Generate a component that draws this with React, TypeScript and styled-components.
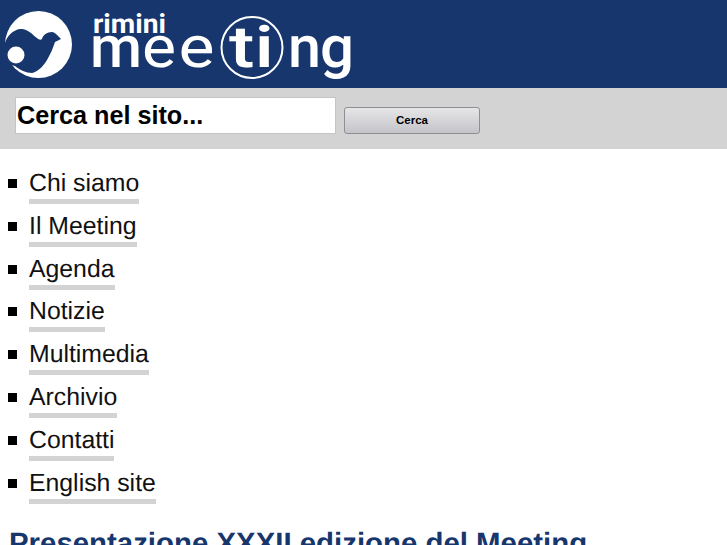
import React from "react";
import styled, { createGlobalStyle } from "styled-components";

const MENU = [
  "Chi siamo",
  "Il Meeting",
  "Agenda",
  "Notizie",
  "Multimedia",
  "Archivio",
  "Contatti",
  "English site",
];

const GlobalStyle = createGlobalStyle`
  html, body {
    margin: 0;
    padding: 0;
    height: 545px;
    overflow: hidden;
    background: #fff;
    font-family: "Liberation Sans", Arial, sans-serif;
    color: #000;
    text-rendering: geometricPrecision;
  }
`;

const Header = styled.header`
  height: 88px;
  background-color: #17366d;
`;

const SearchBar = styled.form`
  height: 61px;
  box-sizing: border-box;
  background-color: #d3d3d3;
  padding: 9px 0 15px 15px;
  display: flex;
  align-items: flex-end;
  gap: 8px;
`;

const SearchInput = styled.input`
  width: 321px;
  height: 37px;
  box-sizing: border-box;
  border: 1px solid #c4c4c4;
  background: #fff;
  padding: 0 1px;
  font-family: "Liberation Sans", Arial, sans-serif;
  font-size: 25.2px;
  font-weight: bold;
  color: #000;
  outline: none;

  &::placeholder {
    color: #000;
    opacity: 1;
  }
`;

const SearchButton = styled.button`
  width: 136px;
  height: 27px;
  box-sizing: border-box;
  border: 1px solid #8f8f93;
  border-radius: 3px;
  background: linear-gradient(#e6e6e8, #c4c4c9);
  font-family: "Liberation Sans", Arial, sans-serif;
  font-size: 11.5px;
  font-weight: bold;
  color: #000;
  padding: 0 0 2px;
`;

const Menu = styled.ul`
  list-style: none;
  margin: 0;
  padding: 18px 0 0 8px;
`;

const MenuItem = styled.li`
  height: 42.8px;
  display: flex;
  align-items: flex-start;
  gap: 12px;
`;

const Bullet = styled.span`
  width: 9px;
  height: 9px;
  margin-top: 12px;
  background: #000;
  flex: none;
`;

const MenuLink = styled.a`
  display: inline-block;
  color: #111;
  font-size: 24.8px;
  text-decoration: none;
  line-height: 30px;
  padding-top: 2px;
  border-bottom: 5px solid #d3d3d3;
`;

const Title = styled.h1`
  margin: 19px 0 0 9px;
  font-size: 29.4px;
  line-height: 32px;
  font-weight: bold;
  color: #17366d;
  white-space: nowrap;
`;

const Logo = () => (
  <svg width="360" height="88" viewBox="0 0 360 88">
    <circle cx="38.5" cy="44.5" r="33.5" fill="#fff" />
    <path
      fill="#17366d"
      d="M5 43 C7 36 13 30 20 29 C27 28 32 34 37 38 C39 40 41 40 42 39 C43 35 47 32 52 32 C55 32 58 36 61 39 L55 42 C53 48 51 53 47 60 C43 67 37 72 32 73 C26 73 20 70 15 66 L0 62 L0 48 Z"
    />
    <circle cx="16" cy="55" r="8.5" fill="#fff" />
    <g fill="#fff" fontFamily="Roboto, sans-serif" fontWeight="500">
      <text x="93" y="33" fontSize="27" fontWeight="700" textLength="73" lengthAdjust="spacingAndGlyphs">
        rimini
      </text>
      <text x="90" y="67" fontSize="58" textLength="52" lengthAdjust="spacingAndGlyphs">
        m
      </text>
      <text x="142" y="67" fontSize="58" fontWeight="400" textLength="34" lengthAdjust="spacingAndGlyphs">
        e
      </text>
      <text x="178.5" y="67" fontSize="58" fontWeight="400" textLength="36" lengthAdjust="spacingAndGlyphs">
        e
      </text>
      <text x="229" y="67" fontSize="58" textLength="45" lengthAdjust="spacingAndGlyphs">
        ti
      </text>
      <text x="288" y="67" fontSize="58" textLength="33" lengthAdjust="spacingAndGlyphs">
        n
      </text>
      <text x="320" y="67" fontSize="58" textLength="34" lengthAdjust="spacingAndGlyphs">
        g
      </text>
    </g>
    <circle cx="252" cy="47.5" r="30.5" fill="none" stroke="#fff" strokeWidth="2" />
  </svg>
);

export default function App() {
  return (
    <>
      <GlobalStyle />
      <Header>
        <Logo />
      </Header>
      <SearchBar onSubmit={(e) => e.preventDefault()}>
        <SearchInput type="text" placeholder="Cerca nel sito..." />
        <SearchButton type="submit">Cerca</SearchButton>
      </SearchBar>
      <Menu>
        {MENU.map((label) => (
          <MenuItem key={label}>
            <Bullet />
            <MenuLink href="#">{label}</MenuLink>
          </MenuItem>
        ))}
      </Menu>
      <Title>Presentazione XXXII edizione del Meeting</Title>
    </>
  );
}
